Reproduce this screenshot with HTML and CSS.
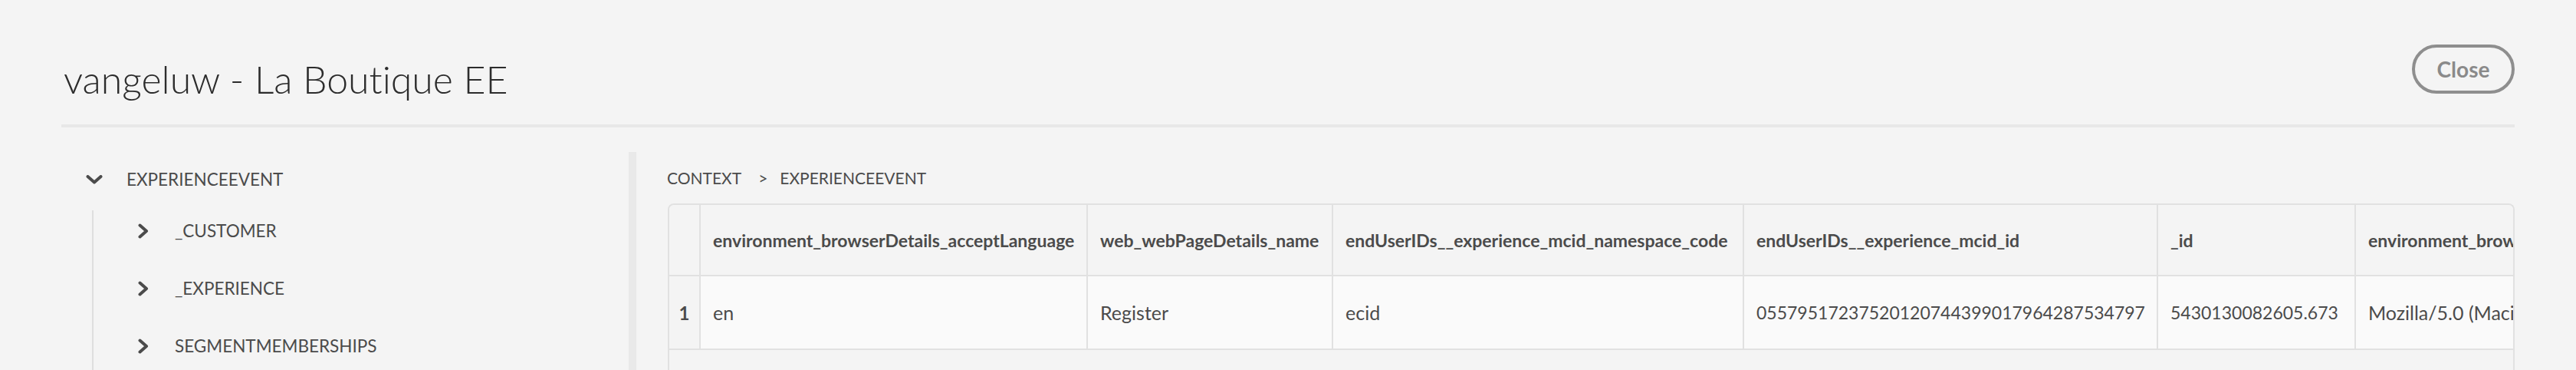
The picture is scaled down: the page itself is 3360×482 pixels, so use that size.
FILE: index.html
```html
<!DOCTYPE html>
<html lang="en">
<head>
<meta charset="utf-8">
<title>vangeluw - La Boutique EE</title>
<link rel="stylesheet" href="styles.css">
</head>
<body>
<div class="page">
  <header class="topbar">
    <h1 class="title">vangeluw - La Boutique EE</h1>
    <button class="close-btn" type="button">Close</button>
  </header>
  <div class="divider"></div>
  <div class="main">
    <nav class="left">
      <div class="tree-row root">
        <svg class="chev-down" width="22" height="12" viewBox="0 0 22 12"><path d="M2.5 2 L11 9.5 L19.5 2" fill="none" stroke="#4b4b4b" stroke-width="4" stroke-linecap="round" stroke-linejoin="round"/></svg>
        <span class="tree-label">EXPERIENCEEVENT</span>
      </div>
      <div class="children">
        <div class="tree-row child">
          <svg class="chev-right" width="14" height="20" viewBox="0 0 14 20"><path d="M2.5 2.5 L11 10 L2.5 17.5" fill="none" stroke="#4b4b4b" stroke-width="4" stroke-linecap="round" stroke-linejoin="round"/></svg>
          <span class="tree-label">_CUSTOMER</span>
        </div>
        <div class="tree-row child">
          <svg class="chev-right" width="14" height="20" viewBox="0 0 14 20"><path d="M2.5 2.5 L11 10 L2.5 17.5" fill="none" stroke="#4b4b4b" stroke-width="4" stroke-linecap="round" stroke-linejoin="round"/></svg>
          <span class="tree-label">_EXPERIENCE</span>
        </div>
        <div class="tree-row child">
          <svg class="chev-right" width="14" height="20" viewBox="0 0 14 20"><path d="M2.5 2.5 L11 10 L2.5 17.5" fill="none" stroke="#4b4b4b" stroke-width="4" stroke-linecap="round" stroke-linejoin="round"/></svg>
          <span class="tree-label">SEGMENTMEMBERSHIPS</span>
        </div>
      </div>
    </nav>
    <div class="sep"></div>
    <section class="right">
      <div class="crumbs">
        <span>CONTEXT</span><span class="crumb-sep">&gt;</span><span>EXPERIENCEEVENT</span>
      </div>
      <div class="table-wrap">
        <table class="grid">
          <colgroup>
            <col class="w-num"><col class="w-c1"><col class="w-c2"><col class="w-c3"><col class="w-c4"><col class="w-c5"><col class="w-c6">
          </colgroup>
          <thead>
            <tr>
              <th class="num"></th>
              <th>environment_browserDetails_acceptLanguage</th>
              <th>web_webPageDetails_name</th>
              <th>endUserIDs__experience_mcid_namespace_code</th>
              <th>endUserIDs__experience_mcid_id</th>
              <th>_id</th>
              <th>environment_browserDetails_userAgent</th>
            </tr>
          </thead>
          <tbody>
            <tr>
              <td class="num">1</td>
              <td>en</td>
              <td>Register</td>
              <td>ecid</td>
              <td class="digits">05579517237520120744399017964287534797</td>
              <td class="digits">5430130082605.673</td>
              <td>Mozilla/5.0 (Macintosh; Intel Mac OS X 10_15_7)</td>
            </tr>
          </tbody>
        </table>
      </div>
    </section>
  </div>
</div>
</body>
</html>
```
FILE: styles.css
```css
html, body {
  margin: 0;
  padding: 0;
  height: 482px;
  overflow: hidden;
  background: #f4f4f4;
  font-family: "Lato", "Liberation Sans", sans-serif;
  font-variant-ligatures: none;
  color: #4b4b4b;
}

.page {
  height: 482px;
  display: flex;
  flex-direction: column;
}

.topbar {
  box-sizing: border-box;
  height: 162px;
  padding: 58px 80px 0 80px;
  display: flex;
  justify-content: space-between;
  align-items: flex-start;
}

.title {
  margin: 15px 0 0 3px;
  font-size: 50px;
  line-height: 60px;
  font-weight: 300;
  color: #2c2c2c;
}

.close-btn {
  box-sizing: border-box;
  width: 134px;
  height: 64px;
  border: 4px solid #8e8e8e;
  border-radius: 32px;
  background: transparent;
  color: #8a8a8a;
  font-family: "Lato", "Liberation Sans", sans-serif;
  font-weight: 700;
  font-size: 28px;
  padding: 0;
}

.divider {
  height: 4px;
  margin: 0 80px;
  background: #e8e8e8;
}

.main {
  flex: 1;
  display: flex;
  padding: 32px 80px 0 80px;
  min-height: 0;
}

.left {
  width: 740px;
  flex: none;
}

.tree-row {
  display: flex;
  align-items: flex-start;
}

.tree-label {
  font-size: 22.5px;
  line-height: 24px;
  color: #4b4b4b;
}

.root {
  height: 76px;
  box-sizing: border-box;
  padding: 24px 0 0 32px;
}

.root .chev-down {
  margin-top: 6px;
  margin-right: 31px;
}

.children {
  margin-left: 40px;
  border-left: 2px solid #dedede;
  height: 300px;
}

.child {
  height: 75px;
  box-sizing: border-box;
  padding: 15px 0 0 58px;
}

.child .chev-right {
  margin-top: 2px;
  margin-right: 34px;
}

.sep {
  width: 10px;
  flex: none;
  background: #e9e9e9;
}

.right {
  flex: 1;
  min-width: 0;
  padding-left: 41px;
}

.crumbs {
  margin-top: 19px;
  font-size: 21px;
  line-height: 30px;
  color: #4b4b4b;
  margin-left: -1px;
}

.crumb-sep {
  margin: 0 16px 0 22px;
}

.table-wrap {
  margin-top: 18px;
  border: 2px solid #e1e1e1;
  border-bottom: none;
  border-radius: 8px 8px 0 0;
  overflow: hidden;
  height: 400px;
  background: #f4f4f4;
}

.grid {
  table-layout: fixed;
  border-collapse: separate;
  border-spacing: 0;
  width: 2700px;
}

.w-num { width: 41px; }
.w-c1 { width: 505px; }
.w-c2 { width: 320px; }
.w-c3 { width: 536px; }
.w-c4 { width: 540px; }
.w-c5 { width: 258px; }
.w-c6 { width: 500px; }

.grid th,
.grid td {
  box-sizing: border-box;
  border-right: 2px solid #e1e1e1;
  border-bottom: 2px solid #e1e1e1;
  padding: 0 0 0 16px;
  text-align: left;
  white-space: nowrap;
  overflow: hidden;
  vertical-align: middle;
}

.grid th {
  height: 93px;
  background: #f4f4f4;
  font-size: 23px;
  font-weight: 700;
  color: #4b4b4b;
}

.grid td {
  height: 96px;
  background: #fafafa;
  font-size: 25px;
  font-weight: 400;
  color: #4b4b4b;
}

.grid td.digits {
  font-size: 23px;
}

.grid .num {
  padding: 0;
  text-align: center;
  background: #f4f4f4;
  font-weight: 700;
  font-size: 24px;
}
```
